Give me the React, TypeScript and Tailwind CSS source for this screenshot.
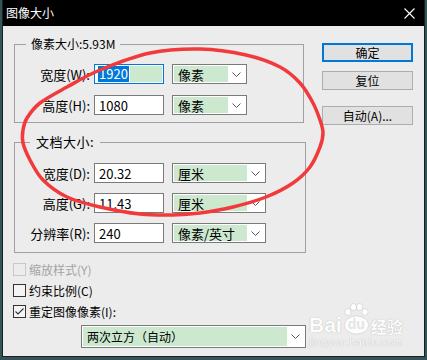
import React from "react";

const FONT = "font-['Noto_Sans_CJK_SC','Noto_Sans',sans-serif]";

const ellipsePts: [number, number][] = [
  [23, 130], [27, 118], [40, 103], [67, 87], [100, 70], [150, 53], [200, 49],
  [246, 55], [280, 67], [300, 83], [313, 103], [320, 120], [323, 133], [320, 147],
  [310, 167], [293, 183], [266, 197], [233, 207], [200, 213], [173, 215], [140, 214],
  [100, 207], [67, 197], [43, 180], [30, 160], [23, 143],
];

function smoothPath(p: [number, number][]) {
  const n = p.length;
  let d = `M${p[0][0]},${p[0][1]}`;
  for (let i = 0; i < n; i++) {
    const p0 = p[(i - 1 + n) % n];
    const p1 = p[i];
    const p2 = p[(i + 1) % n];
    const p3 = p[(i + 2) % n];
    const c1x = p1[0] + (p2[0] - p0[0]) / 6;
    const c1y = p1[1] + (p2[1] - p0[1]) / 6;
    const c2x = p2[0] - (p3[0] - p1[0]) / 6;
    const c2y = p2[1] - (p3[1] - p1[1]) / 6;
    d += ` C${c1x.toFixed(1)},${c1y.toFixed(1)} ${c2x.toFixed(1)},${c2y.toFixed(1)} ${p2[0]},${p2[1]}`;
  }
  return d + " Z";
}

function Chevron() {
  return (
    <svg width="9" height="5" viewBox="0 0 9 5">
      <path d="M0.5 0.5L4.5 4.5L8.5 0.5" fill="none" stroke="#555" strokeWidth="1" />
    </svg>
  );
}

function Select({ w, text }: { w: string; text: string }) {
  return (
    <div className={`flex h-[20px] items-stretch border border-[#7a7a7a] bg-white p-px ${w}`}>
      <div className="flex flex-1 items-center bg-[#cce8cf] pl-[4px] text-[13px] leading-none text-black">
        {text}
      </div>
      <div className="flex w-[17px] items-center justify-center">
        <Chevron />
      </div>
    </div>
  );
}

function Input({ value, focused }: { value: string; focused?: boolean }) {
  if (focused) {
    return (
      <div className="flex h-[20px] w-[70px] items-stretch border border-[#0078d7] bg-white p-px">
        <div className="flex items-center pl-[2px]">
          <span className="bg-[#0078d7] px-px text-[13px] leading-[16px] text-white">{value}</span>
        </div>
        <div className="ml-px flex-1 bg-[#cce8cf]" />
      </div>
    );
  }
  return (
    <div className="flex h-[20px] w-[70px] items-center border border-[#7a7a7a] bg-white pl-[4px] text-[13px] leading-none text-black">
      {value}
    </div>
  );
}

function Row({
  label,
  value,
  unit,
  selW,
  focused,
}: {
  label: string;
  value: string;
  unit: string;
  selW: string;
  focused?: boolean;
}) {
  return (
    <div className="flex h-[20px] items-center">
      <div className="w-[75px] text-right text-[13px] leading-none text-black">{label}</div>
      <div className="ml-[4px]">
        <Input value={value} focused={focused} />
      </div>
      <div className="ml-[8px]">
        <Select w={selW} text={unit} />
      </div>
    </div>
  );
}

function Button({ text, primary }: { text: string; primary?: boolean }) {
  return (
    <div
      className={
        primary
          ? "flex h-[19px] w-[91px] items-center justify-center border-2 border-[#0078d7] bg-[#e1e1e1] text-[12px] leading-none text-black"
          : "flex h-[19px] w-[91px] items-center justify-center border border-[#adadad] bg-[#e1e1e1] text-[12px] leading-none text-black"
      }
    >
      {text}
    </div>
  );
}

function Check({
  label,
  checked,
  disabled,
}: {
  label: string;
  checked?: boolean;
  disabled?: boolean;
}) {
  return (
    <div className="flex h-[21px] items-center">
      <div
        className={
          disabled
            ? "-ml-px h-[13px] w-[13px] border border-[#c8c8c8] bg-[#ececec]"
            : "-ml-px flex h-[13px] w-[13px] items-center justify-center border border-[#333] bg-[#f4f4f4]"
        }
      >
        {checked && (
          <svg width="11" height="11" viewBox="0 0 11 11">
            <path d="M1.5 5.5L4 8L9.5 2.5" fill="none" stroke="#333" strokeWidth="1.1" />
          </svg>
        )}
      </div>
      <span
        className={
          disabled
            ? "ml-[3px] text-[12px] leading-none text-[#a3a3a3]"
            : "ml-[3px] text-[12px] leading-none text-black"
        }
      >
        {label}
      </span>
    </div>
  );
}

export default function App() {
  return (
    <div className={`relative h-[360px] w-[427px] overflow-hidden bg-[#34545c] ${FONT}`}>
      <div className="ml-[2px] flex h-[357px] w-[423px] flex-col border-x border-b border-[#1e1e1e]">
        {/* Title bar */}
        <div className="flex h-[26px] items-center justify-between bg-black pl-[3px] pr-[9px]">
          <span className="text-[12px] leading-none text-white">图像大小</span>
          <svg width="11" height="11" viewBox="0 0 11 11">
            <path d="M0.5 0.5L10.5 10.5M10.5 0.5L0.5 10.5" stroke="#fff" strokeWidth="1.1" />
          </svg>
        </div>

        {/* Body */}
        <div className="flex flex-1 bg-[#ececec]">
          {/* Left column */}
          <div className="flex w-[303px] flex-col pl-[11px] pt-[18px]">
            {/* Group 1 */}
            <div className="relative flex h-[79px] w-[290px] flex-col gap-[11px] border border-[#a0a0a0] pt-[19px]">
              <span className="absolute left-[11px] top-[-10px] bg-[#ececec] px-[5px] text-[12px] leading-[18px] text-black">
                像素大小:5.93M
              </span>
              <Row label="宽度(W):" value="1920" unit="像素" selW="w-[75px]" focused />
              <Row label="高度(H):" value="1080" unit="像素" selW="w-[75px]" />
            </div>

            {/* Group 2 */}
            <div className="relative mt-[19px] flex h-[111px] w-[292px] flex-col gap-[10px] border border-[#a0a0a0] pt-[20px]">
              <span className="absolute left-[15px] top-[-10px] bg-[#ececec] px-[6px] text-[13px] leading-[18px] tracking-[0.5px] text-black">
                文档大小:
              </span>
              <Row label="宽度(D):" value="20.32" unit="厘米" selW="w-[94px]" />
              <Row label="高度(G):" value="11.43" unit="厘米" selW="w-[94px]" />
              <Row label="分辨率(R):" value="240" unit="像素/英寸" selW="w-[94px]" />
            </div>

            {/* Checkboxes */}
            <div className="mt-[6px] flex flex-col">
              <Check label="缩放样式(Y)" disabled />
              <Check label="约束比例(C)" />
              <Check label="重定图像像素(I):" checked />
            </div>

            {/* Resample combobox */}
            <div className="ml-[67px] mt-[3px] flex h-[23px] w-[225px] items-stretch border border-[#7a7a7a] bg-white p-px">
              <div className="flex flex-1 items-center bg-[#cce8cf] pl-[4px] text-[12px] leading-none text-black">
                两次立方（自动）
              </div>
              <div className="flex w-[17px] items-center justify-center">
                <Chevron />
              </div>
            </div>
          </div>

          {/* Right column: buttons */}
          <div className="ml-[16px] flex flex-col pt-[17px]">
            <Button text="确定" primary />
            <div className="mt-[9px]">
              <Button text="复位" />
            </div>
            <div className="mt-[16px]">
              <Button text="自动(A)..." />
            </div>
          </div>
        </div>
      </div>

      {/* Watermark */}
      <div className="pointer-events-none absolute left-[309px] top-[303px] flex flex-col text-white opacity-90 [text-shadow:0_0_1px_rgba(0,0,0,0.35)]">
        <div className="flex items-end">
          <span className="font-['Liberation_Sans',sans-serif] text-[21px] font-bold leading-[20px]">Bai</span>
          <div className="relative mx-[1px] h-[32px] w-[27px]">
            <svg width="27" height="32" viewBox="0 0 27 32" className="absolute left-0 top-0">
              <g fill="#fff" stroke="rgba(0,0,0,0.18)" strokeWidth="0.6">
                <ellipse cx="5" cy="9" rx="3" ry="3.5" />
                <ellipse cx="10.5" cy="4" rx="3" ry="3.5" />
                <ellipse cx="16.5" cy="4" rx="3" ry="3.5" />
                <ellipse cx="22" cy="9" rx="3" ry="3.5" />
                <ellipse cx="13.5" cy="22" rx="12" ry="9" />
              </g>
            </svg>
            <span className="absolute left-[5px] top-[14px] font-['Liberation_Sans',sans-serif] text-[14px] font-bold leading-none text-[#e4e4e4] [text-shadow:none]">
              du
            </span>
          </div>
          <span className="text-[16px] font-bold leading-[18px]">经验</span>
        </div>
        <span className="mt-[2px] font-['Liberation_Sans',sans-serif] text-[11px] leading-none tracking-[0.3px]">
          jingyan.baidu.com
        </span>
      </div>

      {/* Red hand-drawn ellipse */}
      <svg
        className="pointer-events-none absolute left-0 top-0"
        width="427"
        height="360"
        viewBox="0 0 427 360"
      >
        <path d={smoothPath(ellipsePts)} fill="none" stroke="#f23a3c" strokeWidth="3.5" strokeLinecap="round" />
      </svg>
    </div>
  );
}
